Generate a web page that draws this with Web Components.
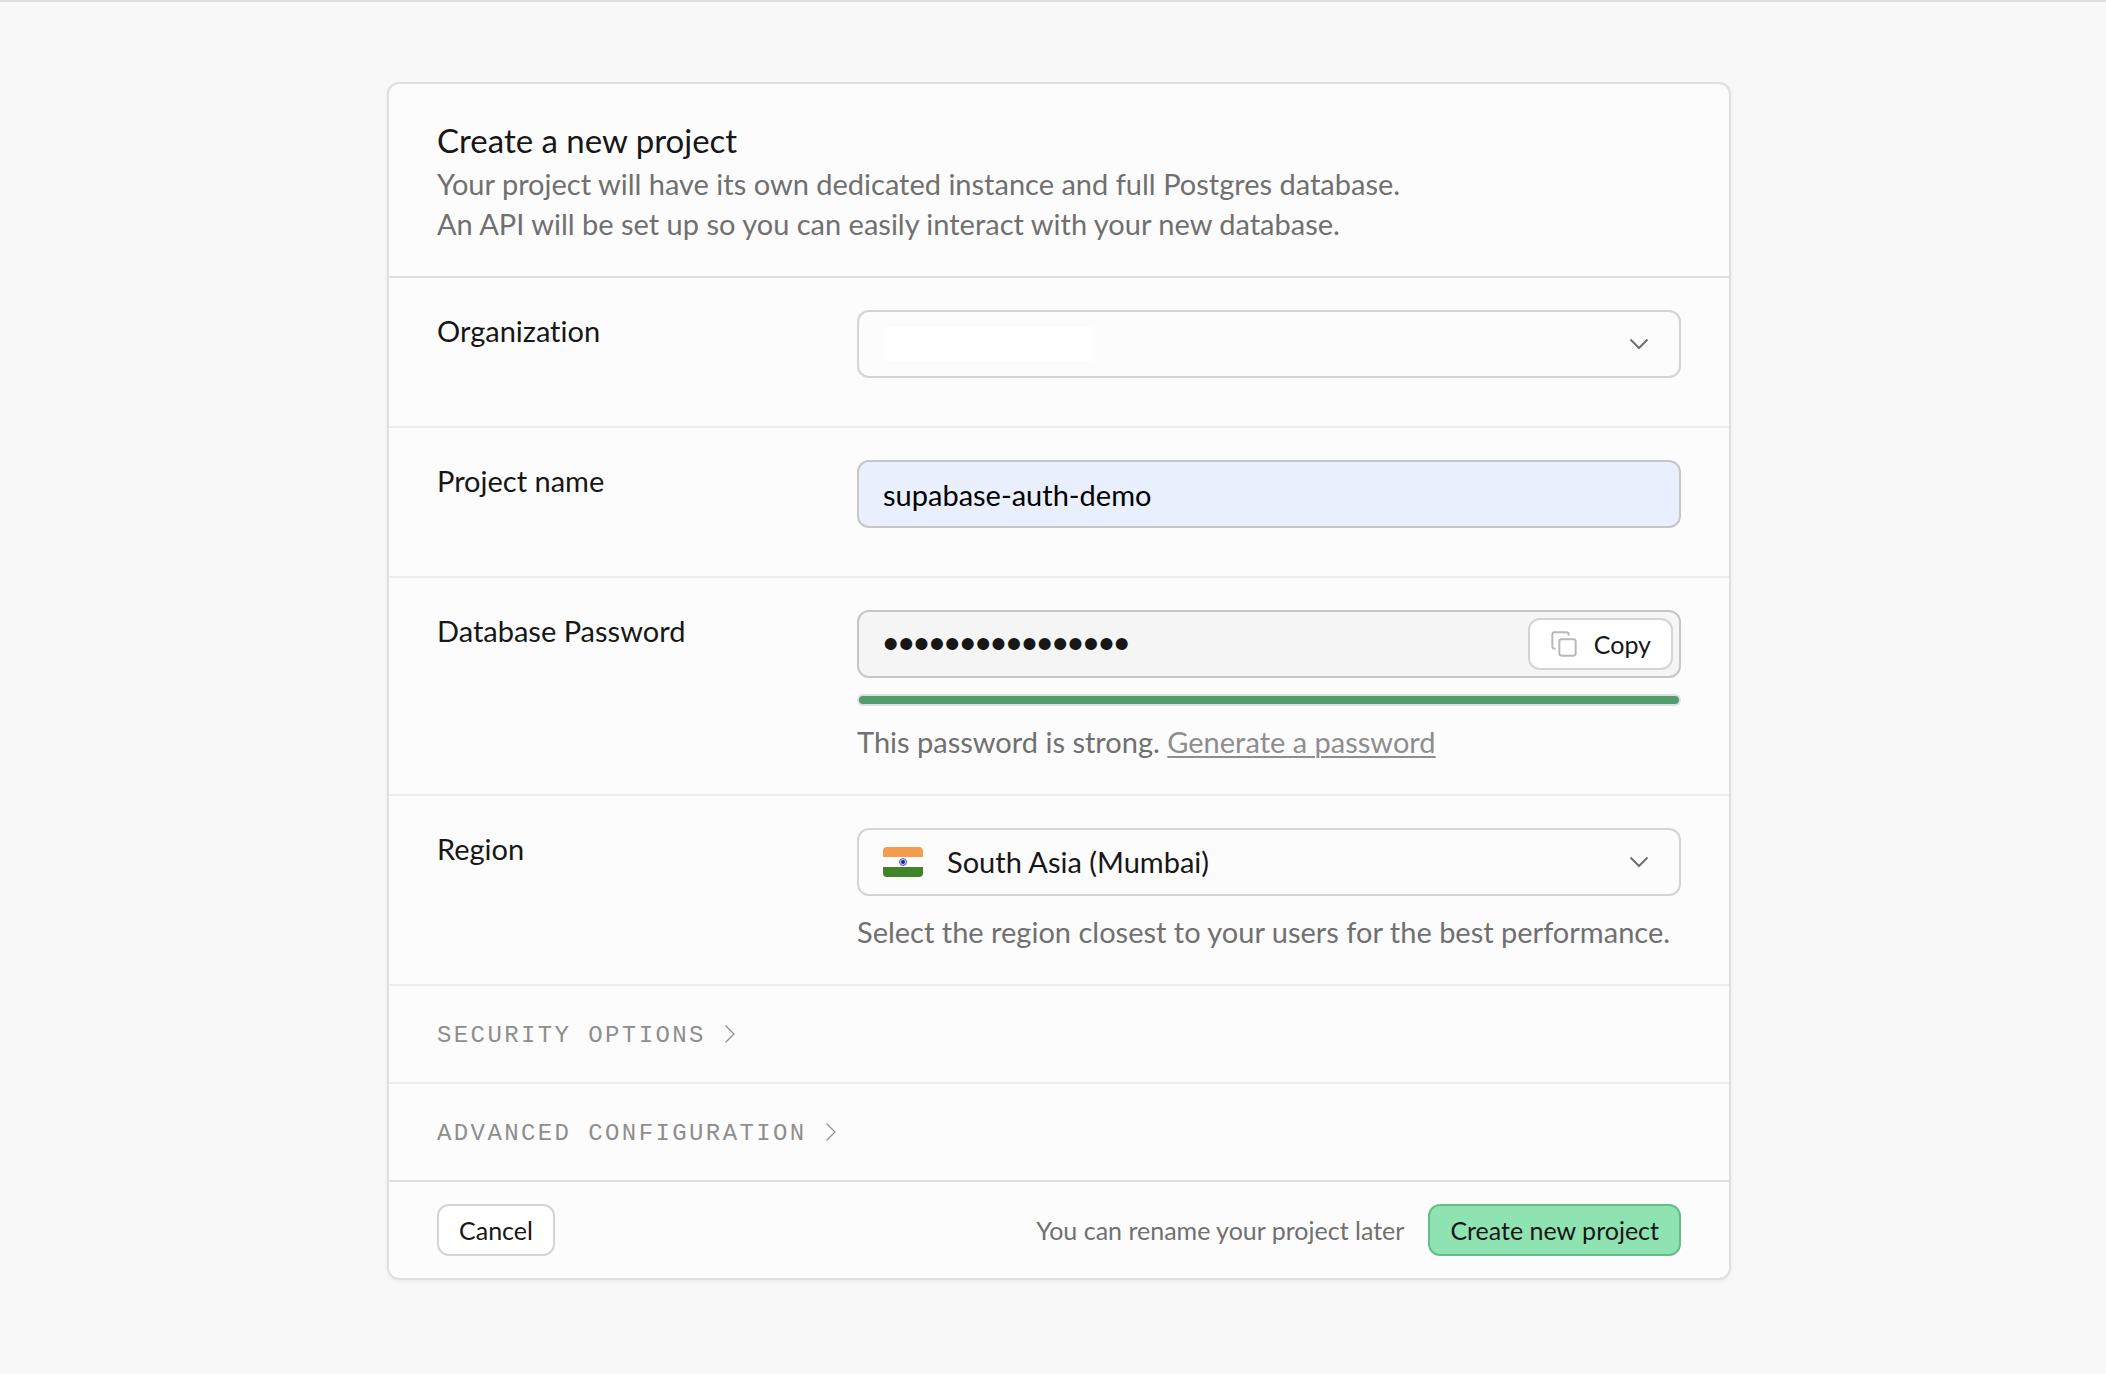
<!DOCTYPE html>
<html lang="en">
<head>
<meta charset="utf-8">
<meta name="viewport" content="width=device-width, initial-scale=1">
<title>Create a new project</title>
<style>
  :root {
    --page: #f8f8f8;
    --surface: #fcfcfc;
    --line: #dfdfdf;
    --line-soft: #ededed;
    --line-control: #d4d4d4;
    --line-strong: #c7c7c7;
    --text: #171717;
    --text-light: #707070;
    --text-lighter: #8e8e8e;
    --gutter: 48px;
    --size-title: 33px;
    --size-body: 29px;
    --size-small: 25px;
    --size-caps: 24px;
    --size-mask: 44px;
  }
  body {
    margin: 0;
    background: var(--page);
    color: var(--text);
    font-family: Lato, "Liberation Sans", sans-serif;
    font-size: var(--size-body);
    font-variant-ligatures: none;
    line-height: 40px;
  }
</style>
</head>
<body>
<page-shell>
  <project-card>
    <card-header slot="header">
      <span slot="title">Create a new project</span>
      Your project will have its own dedicated instance and full Postgres database.<br>An API will be set up so you can easily interact with your new database.
    </card-header>
    <organization-field></organization-field>
    <name-field></name-field>
    <password-field></password-field>
    <region-field></region-field>
    <option-toggle>Security options</option-toggle>
    <option-toggle last>Advanced configuration</option-toggle>
    <card-footer slot="footer"></card-footer>
  </project-card>
</page-shell>

<script>
  class BaseElement extends HTMLElement {
    static base = `
      *, *::before, *::after { box-sizing: border-box; }
      :host { display: block; }
      svg { display: block; flex: none; }
      button, input, select { font: inherit; font-variant-ligatures: none; color: inherit; margin: 0; }
    `;
    connectedCallback() {
      if (this.shadowRoot) return;
      this.attachShadow({ mode: 'open' }).innerHTML =
        `<style>${BaseElement.base}${this.styles()}</style>${this.markup()}`;
    }
    styles() { return ''; }
    markup() { return '<slot></slot>'; }
  }

  customElements.define('page-shell', class extends BaseElement {
    styles() {
      return `
        :host { min-height: 100vh; border-top: 2px solid #dedede; box-sizing: border-box; }
        main { padding: 80px 0 80px 12px; }
      `;
    }
    markup() { return '<main><slot></slot></main>'; }
  });

  customElements.define('project-card', class extends BaseElement {
    styles() {
      return `
        form {
          max-width: 1344px; margin: 0 auto;
          background: var(--surface);
          border: 2px solid var(--line); border-radius: 12px;
          box-shadow: 0 2px 4px rgba(0, 0, 0, .05);
        }
        .body { border: solid var(--line); border-width: 2px 0; }
        .body ::slotted(:not([last])) { border-bottom: 2px solid var(--line-soft); }
      `;
    }
    markup() {
      return `<form onsubmit="return false">
        <slot name="header"></slot>
        <div class="body"><slot></slot></div>
        <slot name="footer"></slot>
      </form>`;
    }
  });

  customElements.define('card-header', class extends BaseElement {
    styles() {
      return `
        header { padding: 32px var(--gutter); }
        h1 { margin: 0; font-size: var(--size-title); line-height: 48px; font-weight: 400; }
        p { margin: 0; color: var(--text-light); }
      `;
    }
    markup() { return '<header><h1><slot name="title"></slot></h1><p><slot></slot></p></header>'; }
  });

  class FieldRow extends BaseElement {
    styles() {
      return `
        .row {
          display: grid; grid-template-columns: 1fr 2fr; column-gap: 8px;
          padding: 32px var(--gutter);
        }
        label { padding-top: 1px; }
        .field { display: flex; flex-direction: column; gap: 16px; min-width: 0; }
        .control { display: grid; align-items: center; }
        .control > * { grid-area: 1 / 1; }
        input, select {
          width: 100%; height: 68px; padding: 0 24px;
          border: 2px solid var(--line-control); border-radius: 12px;
          background-color: transparent; appearance: none; outline: none;
        }
        input { border-color: var(--line-strong); }
        .chevron { justify-self: end; margin-right: 30px; pointer-events: none; }
        p { margin: 0; color: var(--text-light); }
        a { color: var(--text-lighter); text-underline-offset: 3px; text-decoration-thickness: 2px; }
        ${this.fieldStyles()}
      `;
    }
    fieldStyles() { return ''; }
    chevron() {
      return `<svg class="chevron" width="24" height="24" viewBox="0 0 24 24" fill="none" stroke="#707070" stroke-width="2"><path d="M3.500 7.500l8.500 8.500 8.500-8.500"/></svg>`;
    }
    markup() {
      return `<div class="row"><label for="control">${this.label}</label><div class="field">${this.field()}</div></div>`;
    }
  }

  customElements.define('organization-field', class extends FieldRow {
    label = 'Organization';
    fieldStyles() {
      return `
        .row { padding-bottom: 48px; }
        select { background: linear-gradient(#fff, #fff) 25px center / 211px 34px no-repeat; }
      `;
    }
    field() {
      return `<div class="control"><select id="control"><option></option></select>${this.chevron()}</div>`;
    }
  });

  customElements.define('name-field', class extends FieldRow {
    label = 'Project name';
    fieldStyles() {
      return `
        .row { padding-bottom: 48px; }
        input { background: #e9effd; color: #000; }
      `;
    }
    field() {
      return `<div class="control"><input id="control" type="text" value="supabase-auth-demo"></div>`;
    }
  });

  customElements.define('password-field', class extends FieldRow {
    label = 'Database Password';
    fieldStyles() {
      return `
        input {
          background: #f5f5f5; padding-right: 160px;
          font-family: "Liberation Sans", sans-serif; font-size: var(--size-mask);
        }
        button {
          justify-self: end; margin-right: 8px; height: 52px; padding: 0 20px;
          display: flex; align-items: center; gap: 16px;
          font-size: var(--size-small);
          background: #fff; border: 2px solid var(--line-control); border-radius: 12px;
        }
        .meter { height: 12px; border: 2px solid var(--line); border-radius: 6px; background: var(--line); }
        .meter div { height: 100%; border-radius: 4px; background: #529c6d; }
      `;
    }
    field() {
      return `<div class="control">
          <input id="control" type="password" value="Xk7pQ2vLm9RtZw4e">
          <button type="button"><svg width="28" height="28" viewBox="0 0 24 24" fill="none" stroke="#b8b8b8" stroke-width="1.700" stroke-linecap="round" stroke-linejoin="round"><rect x="8" y="8" width="14" height="14" rx="2"/><path d="M4 16c-1.100 0-2-.9-2-2V4c0-1.100.9-2 2-2h10c1.100 0 2 .9 2 2"/></svg>Copy</button>
        </div>
        <div class="meter" role="meter" aria-label="Password strength" aria-valuenow="100"><div></div></div>
        <p>This password is strong. <a href="#">Generate a password</a></p>`;
    }
  });

  customElements.define('region-field', class extends FieldRow {
    label = 'Region';
    fieldStyles() {
      return `
        select { padding-left: 88px; }
        .flag { margin-left: 26px; pointer-events: none; border-radius: 4px; }
      `;
    }
    field() {
      return `<div class="control">
          <select id="control"><option>South Asia (Mumbai)</option></select>
          <svg class="flag" width="40" height="30" viewBox="0 0 40 30"><path fill="#f49d4d" d="M0 0h40v10H0z"/><path fill="#fff" d="M0 10h40v10H0z"/><path fill="#3f8527" d="M0 20h40v10H0z"/><circle cx="20" cy="15" r="3.500" fill="#d5d6ee" stroke="#5358b4"/><circle cx="20" cy="15" r="2" fill="#1c2394"/></svg>
          ${this.chevron()}
        </div>
        <p>Select the region closest to your users for the best performance.</p>`;
    }
  });

  customElements.define('option-toggle', class extends BaseElement {
    styles() {
      return `
        button {
          display: flex; align-items: center; gap: 14px; width: 100%;
          padding: 26px var(--gutter); border: 0; background: none; text-align: left;
          font-family: "Liberation Mono", monospace; font-size: var(--size-caps);
          letter-spacing: .1em; text-transform: uppercase; color: var(--text-lighter);
        }
        span { padding-top: 4px; }
      `;
    }
    markup() {
      return `<button type="button" aria-expanded="false"><span><slot></slot></span><svg width="20" height="20" viewBox="0 0 20 20" fill="none" stroke="#8e8e8e" stroke-width="1.200"><path d="M5.500 1.500L14 10l-8.500 8.500"/></svg></button>`;
    }
  });

  customElements.define('card-footer', class extends BaseElement {
    styles() {
      return `
        footer { display: flex; align-items: center; gap: 24px; padding: 22px var(--gutter); font-size: var(--size-small); }
        p { margin: 0 0 0 auto; color: var(--text-light); }
        button {
          height: 52px; padding: 0 20px;
          background: #fff; border: 2px solid var(--line-control); border-radius: 12px;
        }
        .primary { background: #8fe2b2; border-color: #62bf88; }
      `;
    }
    markup() {
      return `<footer>
        <button type="button">Cancel</button>
        <p>You can rename your project later</p>
        <button class="primary" type="submit">Create new project</button>
      </footer>`;
    }
  });
</script>
</body>
</html>
